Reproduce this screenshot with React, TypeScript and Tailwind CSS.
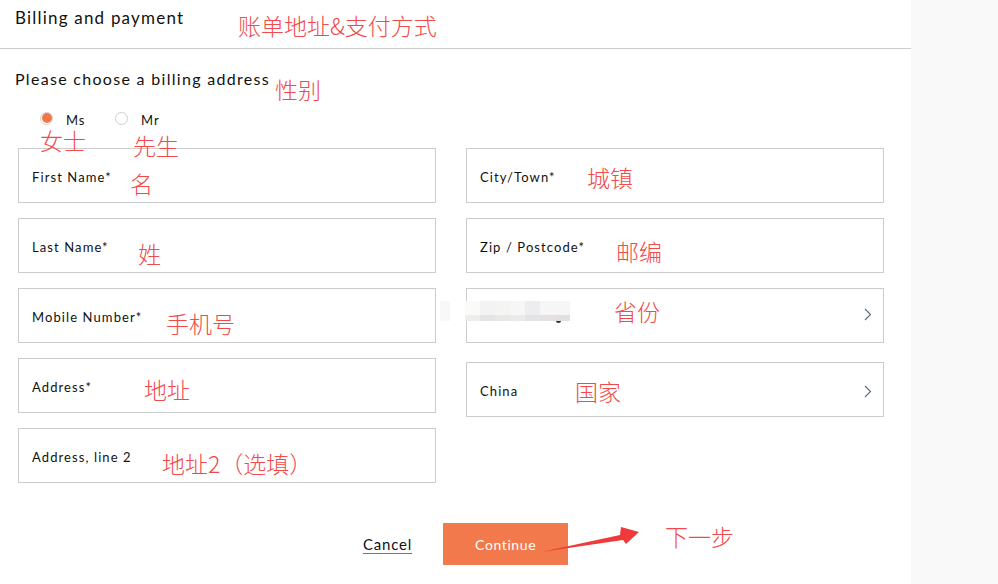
import React from 'react';

const font = { fontFamily: '"Lato", "Liberation Sans", sans-serif' };

type Field = { label: string; chevron?: boolean; extra?: string };

const leftFields: Field[] = [
  { label: 'First Name*' },
  { label: 'Last Name*' },
  { label: 'Mobile Number*' },
  { label: 'Address*' },
  { label: 'Address, line 2' },
];

const rightFields: Field[] = [
  { label: 'City/Town*' },
  { label: 'Zip / Postcode*' },
  { label: '', chevron: true, extra: 'pb-[6px]' },
  { label: 'China', chevron: true, extra: 'mt-[4px] h-[54px] pl-[10px] pt-[2px]' },
];

// annotations drawn over the screenshot
const notes: { text: string; x: number; y: number }[] = [
  { text: '账单地址&支付方式', x: 238, y: 14 },
  { text: '性别', x: 275, y: 78 },
  { text: '女士', x: 40, y: 129 },
  { text: '先生', x: 133, y: 134 },
  { text: '名', x: 130, y: 172 },
  { text: '姓', x: 138, y: 242 },
  { text: '手机号', x: 166, y: 312 },
  { text: '地址', x: 144, y: 378 },
  { text: '地址2（选填）', x: 162, y: 452 },
  { text: '城镇', x: 587, y: 166 },
  { text: '邮编', x: 616, y: 240 },
  { text: '省份', x: 614, y: 300 },
  { text: '国家', x: 575, y: 380 },
  { text: '下一步', x: 665, y: 525 },
];

const blurTop = ['#f8f8f8', '#ffffff', '#fafaf9', '#f3f3f3', '#f4f4f2', '#f6f6f6', '#ededef', '#f6f6f6', '#f6f6f6'];
const blurBottom = ['#f8f8f8', '#ffffff', '#ededed', '#e4e4e6', '#e8e8e6', '#eaeaed', '#e4e4e8', '#e6e0e0', '#e0e0e2'];

const Chevron = () => (
  <svg width="8" height="13" viewBox="0 0 8 13" className="ml-auto">
    <polyline points="1,1 6.5,6.5 1,12" fill="none" stroke="#5b6b7a" strokeWidth="1.1" />
  </svg>
);

const FieldBox = ({ f }: { f: Field }) => (
  <div
    className={`relative flex h-[55px] items-center border border-[#cccccc] bg-white pl-[13px] pr-[11px] pt-[4px] text-[13px] tracking-[1.1px] text-[#111] ${f.extra ?? ''}`}
  >
    <span>{f.label}</span>
    {f.chevron && <Chevron />}
  </div>
);

export default function App() {
  return (
    <div className="relative flex h-[584px] w-[998px] overflow-hidden bg-[#f9f9f9]" style={font}>
      <div className="w-[911px] bg-white">
        <div className="h-[49px] border-b border-[#cccccc] pl-[15px] pt-[5px] text-[17px] tracking-[1.2px] text-[#111]">
          Billing and payment
        </div>
        <div className="pl-[15px] pt-[19px] text-[16px] leading-[21px] tracking-[1.3px] text-[#111]">
          Please choose a billing address
        </div>
        <div className="mt-[22px] flex h-[14px] items-center pl-[40px] text-[13px] leading-[13px] tracking-[0.8px] text-[#111]">
          <span className="flex h-[13px] w-[13px] items-center justify-center rounded-full border border-[#cfcfcf]">
            <span className="h-[10px] w-[10px] rounded-full bg-[#f07848]" />
          </span>
          <span className="ml-[13px] mt-[4px]">Ms</span>
          <span className="ml-[30px] h-[13px] w-[13px] rounded-full border border-[#cfcfcf]" />
          <span className="ml-[13px] mt-[4px]">Mr</span>
        </div>
        <div className="ml-[18px] mt-[23px] grid w-[866px] grid-cols-2 gap-x-[30px]">
          <div className="flex flex-col gap-[15px]">
            {leftFields.map((f) => (
              <FieldBox key={f.label} f={f} />
            ))}
          </div>
          <div className="flex flex-col gap-[15px]">
            {rightFields.map((f, i) => (
              <FieldBox key={i} f={f} />
            ))}
          </div>
        </div>
        <div className="mt-[40px] flex items-center pl-[363px]">
          <span className="border-b border-[#777] text-[15px] leading-[18px] tracking-[0.8px] text-[#111]">Cancel</span>
          <button className="ml-[31px] h-[42px] w-[125px] bg-[#f2794b] text-[14px] tracking-[0.6px] text-white">
            Continue
          </button>
        </div>
      </div>

      {/* pixelated mask over the province field */}
      <div className="absolute left-[440px] top-[301px] flex">
        {blurTop.map((c, i) => (
          <div key={i} className={i === 0 ? 'w-[10px]' : 'w-[15px]'}>
            <div className="h-[14px]" style={{ backgroundColor: c }} />
            <div className="h-[6px]" style={{ backgroundColor: blurBottom[i] }} />
          </div>
        ))}
      </div>
      <span className="absolute left-[556px] top-[318px] h-[5px] w-[5px] rounded-b-full border-b-2 border-[#333]" />

      {/* red arrow */}
      <svg className="absolute left-0 top-0" width="998" height="584" viewBox="0 0 998 584">
        <polygon points="541,552 620,535 621,527 639,532 626,544 623,540" fill="#f03a3a" />
      </svg>

      {notes.map((n) => (
        <span
          key={n.text}
          className="absolute whitespace-nowrap text-[23px] leading-[22px] text-[#f24a4a]"
          style={{ left: n.x, top: n.y, fontFamily: '"Noto Sans CJK SC", sans-serif', fontWeight: 300 }}
        >
          {n.text}
        </span>
      ))}
    </div>
  );
}
